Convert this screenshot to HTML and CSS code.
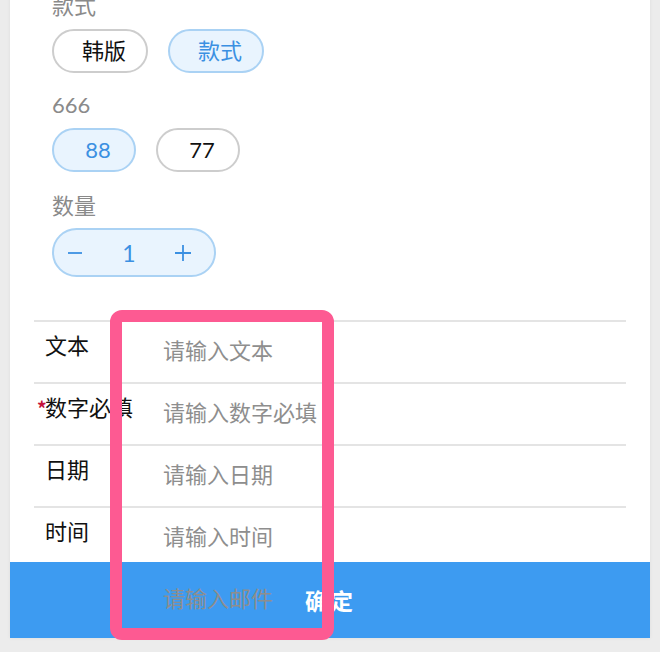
FILE: index.html
```html
<!DOCTYPE html>
<html lang="zh-CN">
<head>
<meta charset="utf-8">
<title>规格选择</title>
<link rel="stylesheet" href="styles.css">
</head>
<body>
<div class="sheet">
  <div class="sheet-body">
    <div class="specs">
      <div class="spec-title">款式</div>
      <div class="chips">
        <span class="chip">韩版</span>
        <span class="chip chip-active">款式</span>
      </div>
      <div class="spec-title spec-gap">666</div>
      <div class="chips">
        <span class="chip chip-active">88</span>
        <span class="chip">77</span>
      </div>
      <div class="spec-title spec-gap-lg">数量</div>
      <div class="stepper">
        <span class="step-btn">
          <svg width="16" height="16" viewBox="0 0 16 16"><path d="M1 8h14" stroke="#3b90e2" stroke-width="1.8" fill="none"/></svg>
        </span>
        <span class="step-val">1</span>
        <span class="step-btn">
          <svg width="18" height="18" viewBox="0 0 18 18"><path d="M1 9h16M9 1v16" stroke="#3b90e2" stroke-width="1.8" fill="none"/></svg>
        </span>
      </div>
    </div>
    <div class="form">
      <div class="form-row"><span class="form-label">文本</span></div>
      <div class="form-row"><span class="form-label req">数字必填</span></div>
      <div class="form-row"><span class="form-label">日期</span></div>
      <div class="form-row"><span class="form-label">时间</span></div>
      <div class="form-row"><span class="form-label">邮件</span></div>
    </div>
  </div>
  <div class="sheet-footer">确定</div>
</div>
<div class="highlight">
  <input class="ph-input" placeholder="请输入文本">
  <input class="ph-input" placeholder="请输入数字必填">
  <input class="ph-input" placeholder="请输入日期">
  <input class="ph-input" placeholder="请输入时间">
  <input class="ph-input" placeholder="请输入邮件">
</div>
</body>
</html>
```
FILE: styles.css
```css
html, body {
  margin: 0;
  padding: 0;
}
body {
  background: #ececec;
  font-family: "Noto Sans CJK SC", "Noto Sans", sans-serif;
  width: 660px;
  height: 652px;
  overflow: hidden;
}
.sheet {
  margin: -10px 0 0 10px;
  width: 640px;
  height: 648px;
  background: #ffffff;
  display: flex;
  flex-direction: column;
  box-shadow: 0 0 4px rgba(0,0,0,0.06);
}
.sheet-body {
  flex: 1;
  overflow: hidden;
}
.specs {
  padding: 2px 0 0 42px;
}
.spec-title {
  font-family: "Lato", "Noto Sans CJK SC", sans-serif;
  font-size: 22px;
  line-height: 28px;
  color: #8a8a8a;
}
.spec-gap { margin-top: 18px; }
.spec-gap-lg { margin-top: 20px; }
.chips {
  display: flex;
  gap: 20px;
  margin-top: 9px;
}
.chip {
  box-sizing: border-box;
  min-width: 84px;
  height: 44px;
  padding: 0 20px 0 28px;
  border: 2px solid #cdcdcd;
  border-radius: 22px;
  font-family: "Lato", "Noto Sans CJK SC", sans-serif;
  font-size: 22px;
  line-height: 40px;
  color: #111;
  text-align: center;
}
.chip-active {
  background: #e9f4fe;
  border-color: #aad2f4;
  color: #3b90e2;
}
.stepper {
  box-sizing: border-box;
  margin-top: 8px;
  width: 164px;
  height: 49px;
  border: 2px solid #aad2f4;
  background: #e9f4fe;
  border-radius: 25px;
  display: flex;
  align-items: center;
  gap: 14px;
  padding: 0 10px 0 1px;
}
.step-btn, .step-val {
  width: 40px;
  display: flex;
  justify-content: center;
  align-items: center;
}
.step-val {
  font-family: "Lato", sans-serif;
  font-size: 23px;
  color: #3b90e2;
  line-height: 28px;
}
.form {
  margin: 43px 24px 0;
}
.form-row {
  box-sizing: border-box;
  height: 62px;
  border-top: 2px solid #e4e4e4;
  padding: 8px 0 0 11px;
}
.form-label {
  font-size: 22px;
  line-height: 28px;
  color: #111;
}
.req::before {
  content: "*";
  display: inline-block;
  width: 8px;
  margin-left: -8px;
  color: #c4123a;
  font-size: 19px;
  font-weight: 700;
}
.sheet-footer {
  height: 76px;
  background: #3d9bf1;
  color: #ffffff;
  font-size: 23px;
  font-weight: 700;
  display: flex;
  align-items: center;
  justify-content: center;
  letter-spacing: 2px;
}
.highlight {
  position: absolute;
  left: 110px;
  top: 310px;
  width: 224px;
  height: 330px;
  box-sizing: border-box;
  border: 12px solid #fd5a92;
  border-radius: 12px;
  overflow: hidden;
}
.ph-input {
  display: block;
  box-sizing: border-box;
  width: 100%;
  height: 62px;
  margin: 0;
  padding: 13px 0 21px 41px;
  border: none;
  outline: none;
  background: transparent;
  font-family: "Noto Sans CJK SC", sans-serif;
  font-size: 22px;
  line-height: 28px;
}
.ph-input::placeholder {
  color: #8e8e8e;
}
```
